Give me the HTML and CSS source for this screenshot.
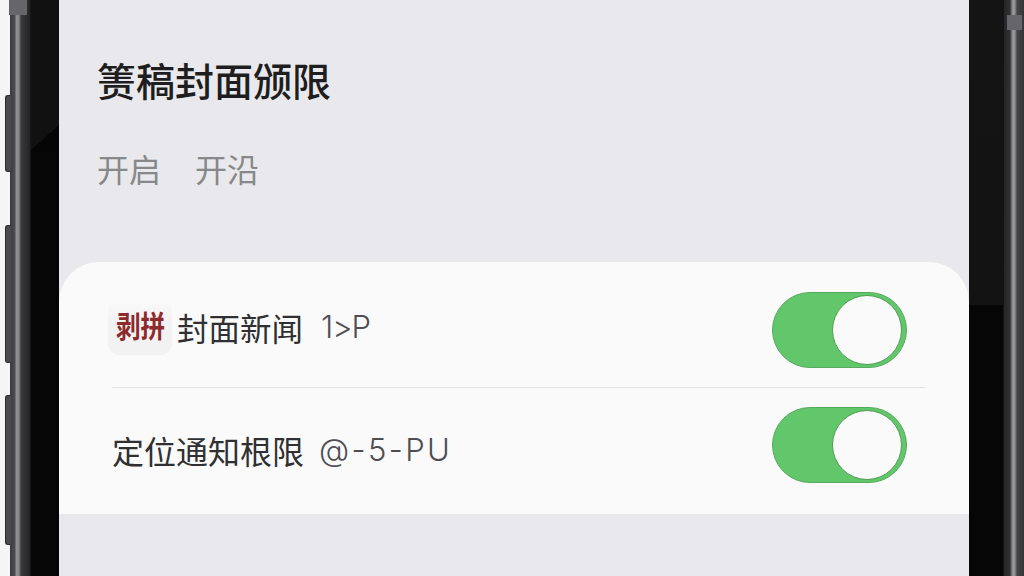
FILE: index.html
```html
<!DOCTYPE html>
<html lang="zh-CN">
<head>
    <meta charset="UTF-8">
    <meta name="viewport" content="width=device-width, initial-scale=1.0">
    <title>封面权限</title>
    <link rel="stylesheet" href="styles.css">
</head>
<body>
    <div class="phone">
        <div class="rail-left">
            <span class="side-btn btn-a"></span>
            <span class="side-btn btn-b"></span>
            <span class="side-btn btn-c"></span>
            <span class="top-cap cap-left"></span>
        </div>
        <div class="screen">
            <div class="header">
                <h1>箦稿封面颁限</h1>
                <p class="sub"><span>开启</span><span>开沿</span></p>
            </div>
            <div class="card">
                <div class="row row-first">
                    <div class="row-label">
                        <span class="logo"><span class="logo-text">剥拼</span></span>
                        <span class="name">封面新闻</span>
                        <span class="code">1&gt;P</span>
                    </div>
                    <div class="toggle"><span class="knob"></span></div>
                </div>
                <div class="row row-last">
                    <div class="row-label">
                        <span class="name">定位通知根限</span>
                        <span class="code">@-5-PU</span>
                    </div>
                    <div class="toggle"><span class="knob"></span></div>
                </div>
            </div>
            <div class="footer"></div>
        </div>
        <div class="rail-right">
            <span class="top-cap cap-right"></span>
        </div>
    </div>
</body>
</html>
```

FILE: styles.css
```css
* {
    box-sizing: border-box;
}

body {
    margin: 0;
    width: 1024px;
    height: 576px;
    overflow: hidden;
    background-color: #f4f4f4;
    font-family: "Noto Sans CJK SC", "Noto Sans", sans-serif;
}

.phone {
    display: flex;
    height: 576px;
}

/* phone body, left side */
.rail-left {
    position: relative;
    width: 59px;
    flex-shrink: 0;
    background:
        linear-gradient(#111111, #111111) 31px 0 / 28px 125px no-repeat,
        linear-gradient(to bottom right, #111111 50%, #050505 50%) 31px 125px / 28px 25px no-repeat,
        linear-gradient(to right,
            #f5f5f5 0, #f5f5f5 10px,
            #3c3c3e 10px, #4c4c4e 15px,
            #909093 16px, #858588 19px,
            #3a3a3c 21px, #242426 30px,
            #060606 31px, #050505 59px);
}

.rail-right {
    position: relative;
    width: 55px;
    flex-shrink: 0;
    background:
        linear-gradient(#141414, #131313) 0 0 / 35px 305px no-repeat,
        linear-gradient(to right,
            #060606 0, #060606 34px,
            #262628 35px, #303032 41px,
            #5a5a5c 42px, #a0a0a3 44px, #8a8a8d 46px,
            #454547 48px, #353537 55px);
}

.side-btn {
    position: absolute;
    left: 5px;
    width: 6px;
    background-color: #4b4b4d;
    border: 1px solid #2c2c2e;
    border-right: none;
    border-radius: 3px 0 0 3px;
}

.btn-a {
    top: 95px;
    height: 77px;
}

.btn-b {
    top: 225px;
    height: 138px;
}

.btn-c {
    top: 395px;
    height: 150px;
}

.top-cap {
    position: absolute;
    top: 0;
    background-color: #66666a;
}

.cap-left {
    left: 9px;
    width: 18px;
    height: 15px;
}

.cap-right {
    top: 15px;
    left: 38px;
    width: 15px;
    height: 15px;
}

/* screen */
.screen {
    flex: 1;
    display: flex;
    flex-direction: column;
    background-color: #e9e9ed;
}

.header {
    height: 262px;
    padding: 51px 0 0 38px;
}

h1 {
    margin: 0;
    font-size: 39px;
    line-height: 56px;
    font-weight: 500;
    color: #1e1e20;
}

.sub {
    display: flex;
    gap: 34px;
    margin: 38px 0 0;
    font-size: 32px;
    line-height: 46px;
    color: #88888a;
}

.card {
    background-color: #fafafb;
    border-radius: 40px 40px 0 0;
}

.row {
    display: flex;
    align-items: center;
    justify-content: space-between;
    margin: 0 44px 0 53px;
    padding-right: 18px;
}

.row-first {
    padding-top: 30px;
    padding-bottom: 19px;
    border-bottom: 1px solid #e0e0e1;
}

.row-last {
    padding-top: 19px;
    padding-bottom: 31px;
}

.row-label {
    display: flex;
    align-items: center;
}

.row-first .row-label {
    margin-bottom: 6px;
}

.row-last .row-label {
    margin-top: 10px;
}

.logo {
    width: 64px;
    height: 56px;
    margin: 0 5px 0 -4px;
    padding-left: 8px;
    border-radius: 12px;
    background: linear-gradient(#fafafb, #f3f2f3 40%);
    overflow: hidden;
    white-space: nowrap;
}

.logo-text {
    display: block;
    width: 60px;
    font-size: 30px;
    line-height: 50px;
    font-weight: 700;
    color: #8c2a2c;
    transform: scaleX(0.82);
    transform-origin: left center;
}

.name {
    font-size: 32px;
    line-height: 46px;
    color: #303032;
}

.row-first .name {
    font-size: 31.5px;
}

.code {
    margin-left: 18px;
    font-family: "Inter", "Noto Sans", sans-serif;
    font-size: 31px;
    font-weight: 300;
    line-height: 46px;
    color: #4e4e52;
}

.row-first .code {
    letter-spacing: -1px;
}

.row-last .code {
    margin-left: 15px;
    letter-spacing: 2.4px;
}

.toggle {
    display: flex;
    justify-content: flex-end;
    align-items: center;
    width: 135px;
    height: 76px;
    padding-right: 4px;
    border-radius: 38px;
    background-color: #62c76a;
    border: 1px solid #57a95d;
}

.knob {
    width: 70px;
    height: 70px;
    border-radius: 50%;
    background-color: #fafafa;
    border: 1px solid #4f9e56;
}

.footer {
    flex: 1;
}
```
